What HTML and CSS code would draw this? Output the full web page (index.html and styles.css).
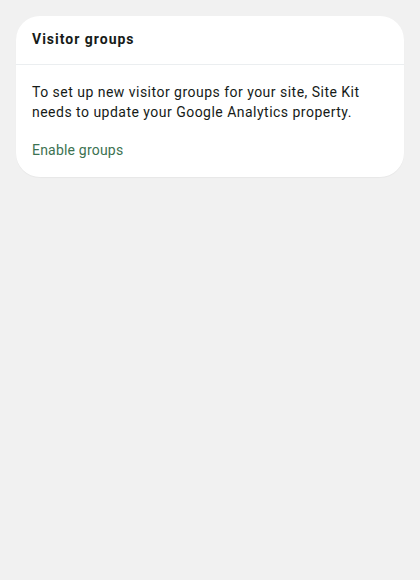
FILE: index.html
```html
<!DOCTYPE html>
<html>
<head>
<meta charset="utf-8">
<link rel="stylesheet" href="styles.css">
</head>
<body>
<div class="page">
  <section class="card">
    <header class="card-header">
      <h2 class="card-title">Visitor groups</h2>
    </header>
    <div class="card-body">
      <p class="card-text">To set up new visitor groups for your site, Site Kit needs to update your Google Analytics property.</p>
      <a class="card-link" href="#">Enable groups</a>
    </div>
  </section>
</div>
</body>
</html>
```

FILE: styles.css
```css
html, body {
  margin: 0;
  padding: 0;
  background: #f1f1f1;
}
.page {
  padding: 16px;
  font-family: Roboto, "Liberation Sans", sans-serif;
  color: #161b18;
}
.card {
  background: #fff;
  border-radius: 24px;
  box-shadow: 0 1px 1px rgba(0,0,0,0.04);
}
.card-header {
  padding: 14px 16px 16px;
  border-bottom: 1px solid #ebeef0;
}
.card-title {
  margin: 0;
  font-size: 14px;
  line-height: 18px;
  font-weight: 700;
  letter-spacing: 1px;
}
.card-body {
  padding: 17px 16px 17px;
}
.card-text {
  margin: 0 0 18px;
  font-size: 14px;
  line-height: 20px;
  letter-spacing: 0.48px;
}
.card-link {
  display: inline-block;
  font-size: 14px;
  line-height: 20px;
  color: #3c7251;
  text-decoration: none;
  letter-spacing: 0.2px;
}
```
